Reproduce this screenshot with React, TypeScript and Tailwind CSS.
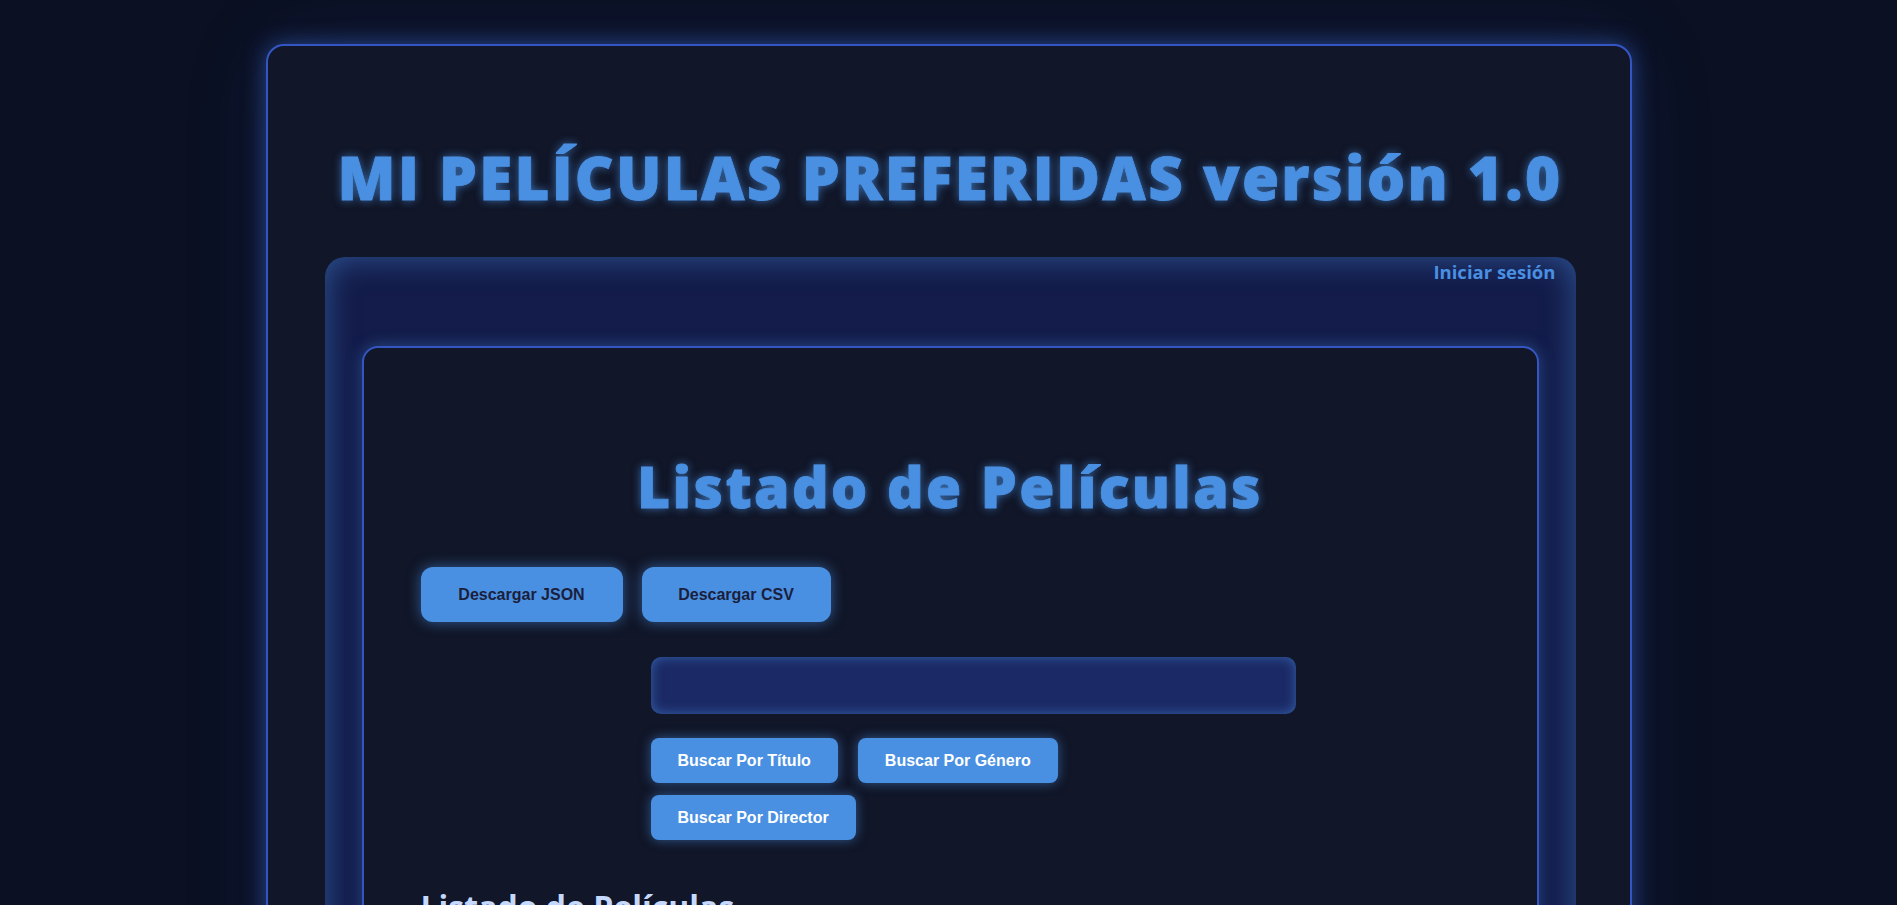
import { useState } from "react";

const HEAD_FONT = "font-['Open_Sans','Noto_Sans',sans-serif]";
const BTN_FONT = "font-['Liberation_Sans',Arial,sans-serif]";

function SearchButton({ label }: { label: string }) {
  return (
    <button
      className={`h-[45px] rounded-lg bg-[#4a90e2] px-[27px] text-[16px] font-bold text-white shadow-[0_0_12px_rgba(74,144,226,0.55)] ${BTN_FONT}`}
    >
      {label}
    </button>
  );
}

export default function App() {
  const [query, setQuery] = useState("");

  return (
    <div className="min-h-screen bg-[#0b1022] pt-[44px] pb-20">
      <div className="mx-auto w-[1366px] rounded-[18px] border-2 border-[#3456c4] bg-[#111628] pl-[57px] pr-[54px] pb-16 shadow-[0_0_22px_rgba(59,110,220,0.55),0_0_90px_rgba(59,110,220,0.12)]">
        {/* page title */}
        <h1
          className={`pt-[95px] text-center text-[60px] leading-[1.2] font-extrabold tracking-[2.3px] whitespace-nowrap text-[#4a90e2] [-webkit-text-stroke:0.8px_#4a90e2] [text-shadow:0_0_10px_rgba(74,144,226,0.75)] ${HEAD_FONT}`}
        >
          MI PELÍCULAS PREFERIDAS versión 1.0
        </h1>

        {/* nav panel */}
        <div className="mt-[44px] rounded-[20px] bg-[#131c4a] pt-[3px] pb-10 shadow-[inset_0_0_32px_rgba(74,144,226,0.5)]">
          <div className="flex justify-end pr-5">
            <a className={`text-[18.5px] leading-[24px] font-bold text-[#4a90e2] ${HEAD_FONT}`} href="#">
              Iniciar sesión
            </a>
          </div>

          <div className="px-[37px] pt-[62px]">
            <main className="rounded-[16px] border-2 border-[#3456c4] bg-[#111628] px-[57px] pb-20 shadow-[0_0_16px_rgba(74,144,226,0.4)]">
              <h2
                className={`pt-[104px] text-center text-[57px] leading-[1.2] font-extrabold tracking-[2.4px] text-[#4a90e2] [-webkit-text-stroke:0.8px_#4a90e2] [text-shadow:0_0_10px_rgba(74,144,226,0.75)] ${HEAD_FONT}`}
              >
                Listado de Películas
              </h2>

              <div className="mt-[47px] flex gap-[19px]">
                <button
                  className={`h-[55px] w-[202px] rounded-xl bg-[#4a90e2] text-[16px] font-bold text-[#1a1f3d] shadow-[0_0_14px_rgba(74,144,226,0.6)] ${BTN_FONT}`}
                >
                  Descargar JSON
                </button>
                <button
                  className={`h-[55px] w-[189px] rounded-xl bg-[#4a90e2] text-[16px] font-bold text-[#1a1f3d] shadow-[0_0_14px_rgba(74,144,226,0.6)] ${BTN_FONT}`}
                >
                  Descargar CSV
                </button>
              </div>

              <div className="mt-[35px] ml-[230px] w-[645px]">
                <input
                  value={query}
                  onChange={(e) => setQuery(e.target.value)}
                  className={`block h-[57px] w-full rounded-[10px] bg-[#1b2a66] px-4 text-[16px] text-white outline-none shadow-[inset_0_0_12px_rgba(74,144,226,0.55)] ${BTN_FONT}`}
                />
                <div className="mt-[24px] flex w-[440px] flex-wrap gap-x-5 gap-y-3">
                  <SearchButton label="Buscar Por Título" />
                  <SearchButton label="Buscar Por Género" />
                  <SearchButton label="Buscar Por Director" />
                </div>
              </div>

              <h3 className={`mt-[43px] text-[32px] font-bold text-[#c5d9ff] ${HEAD_FONT}`}>
                Listado de Películas
              </h3>
              <div className="mt-6 h-40" />
            </main>
          </div>
        </div>
      </div>
    </div>
  );
}
